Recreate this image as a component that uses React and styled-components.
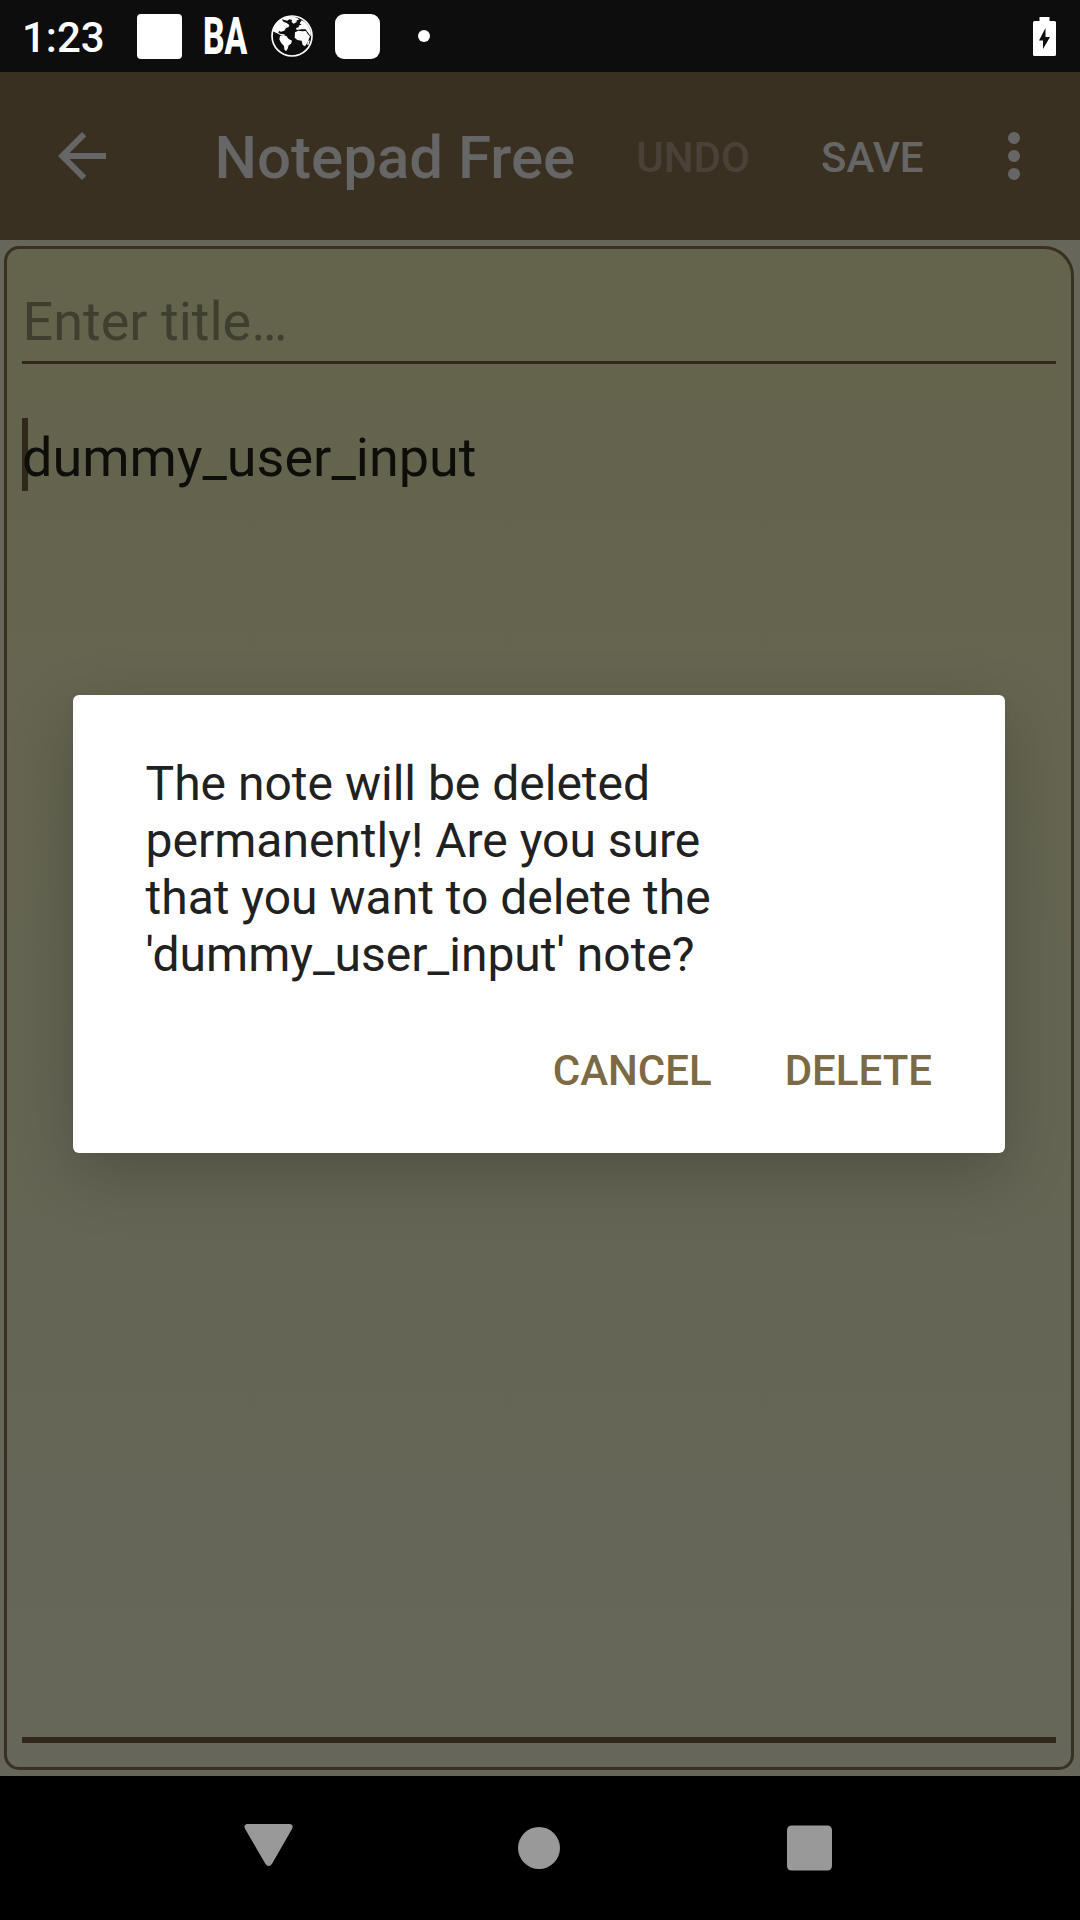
import React from "react";
import styled, { createGlobalStyle } from "styled-components";

const GlobalStyle = createGlobalStyle`
  *, *::before, *::after { box-sizing: border-box; }
  body {
    margin: 0;
    background: #000;
    font-family: Roboto, "Noto Sans", sans-serif;
  }
`;

const Screen = styled.div`
  position: relative;
  display: flex;
  flex-direction: column;
  width: 1080px;
  height: 1920px;
  overflow: hidden;
`;

const StatusBar = styled.header`
  display: flex;
  align-items: center;
  height: 72px;
  padding: 0 24px 0 22px;
  background: #0d0d0d;
  color: #fff;
`;

const Clock = styled.span`
  width: 115px;
  font-size: 42px;
  font-weight: 500;
  line-height: 50px;
  padding-top: 3px;
`;

const NoticeSquare = styled.span`
  width: 45px;
  height: 45px;
  border-radius: ${(p) => p.$radius}px;
  background: #fff;
  margin-right: ${(p) => p.$after}px;
`;

const BrandSlot = styled.span`
  display: flex;
  width: 68px;
  height: 50px;
`;

const BrandText = styled.span`
  font-size: 51px;
  line-height: 51px;
  font-weight: 800;
  transform: scaleX(0.66);
  transform-origin: left center;
`;

const Globe = styled.svg`
  width: 42px;
  height: 42px;
  margin-right: 22px;
  fill: #fff;
`;

const MoreDot = styled.span`
  width: 12px;
  height: 12px;
  border-radius: 50%;
  background: #fff;
`;

const Spacer = styled.span`
  flex: 1;
`;

const Toolbar = styled.nav`
  display: flex;
  align-items: center;
  height: 168px;
  padding: 0 30px 0 46px;
  background: #393022;
  color: #666;
`;

const ToolbarIcon = styled.svg`
  display: block;
  flex: none;
  width: 72px;
  height: 72px;
  fill: currentColor;
`;

const ToolbarTitle = styled.h1`
  width: 422px;
  margin: 0 0 0 96.5px;
  font-size: 60px;
  font-weight: 500;
  line-height: 70px;
  padding-top: 4px;
  white-space: nowrap;
`;

const ToolbarAction = styled.span`
  width: ${(p) => p.$width}px;
  font-size: 42px;
  font-weight: 500;
  line-height: 50px;
  padding-top: 3px;
  color: ${(p) => (p.$disabled ? "#4a4238" : "#666")};
`;

const Page = styled.main`
  display: flex;
  height: 1536px;
  padding: 6px 6px 6px 4px;
  background: #66665a;
`;

const NoteCard = styled.section`
  display: flex;
  flex-direction: column;
  flex: 1;
  padding: 0 15px 24px 15px;
  border: 3px solid #393022;
  border-radius: 15px 30px 15px 15px;
  background: linear-gradient(#64644c, #66665a);
`;

const TitleField = styled.div`
  height: 115px;
  padding: 41px 0 0 0.5px;
  border-bottom: 3px solid #30291b;
  font-size: 54px;
  line-height: 64px;
  color: #3f3f30;
`;

const BodyField = styled.div`
  display: flex;
  flex: 1;
  align-items: flex-start;
  padding-top: 54px;
  border-bottom: 6px solid #30291b;
  font-size: 54px;
  line-height: 73px;
  color: #0d0d0a;
`;

const Cursor = styled.span`
  width: 6px;
  height: 73px;
  margin-right: -6px;
  background: #30291b;
`;

const BodyText = styled.span`
  position: relative;
  padding-top: 3px;
`;

const NavBar = styled.footer`
  display: flex;
  align-items: center;
  justify-content: center;
  gap: 198px;
  height: 144px;
  padding-right: 2px;
  background: #000;
`;

const NavIcon = styled.svg`
  width: 72px;
  height: 72px;
  fill: #999;
`;

const DialogLayer = styled.div`
  position: absolute;
  inset: 72px 0 144px;
  display: flex;
  align-items: center;
  justify-content: center;
  padding-right: 2px;
`;

const Dialog = styled.div`
  display: flex;
  flex-direction: column;
  width: 932px;
  height: 458px;
  padding: 60px 73px 0 72.5px;
  border-radius: 6px;
  background: #fff;
  box-shadow: 0 22px 66px rgba(0, 0, 0, 0.2), 0 2px 10px rgba(0, 0, 0, 0.03);
`;

const Message = styled.p`
  width: 600px;
  margin: 0;
  font-size: 48px;
  line-height: 57px;
  color: #212121;
`;

const Actions = styled.div`
  display: flex;
  justify-content: flex-end;
  gap: 73px;
  margin-top: 63px;
`;

const DialogButton = styled.span`
  font-size: 42px;
  font-weight: 500;
  line-height: 50px;
  color: #7b6a43;
`;

const GlobeIcon = () => (
  <Globe viewBox="20 21 126 126">
    <circle cx="83" cy="84" r="60" fill="none" stroke="#fff" strokeWidth="5" />
    <path d="M25 70 32 51 45 37 52 34 58 42 66 44 75 51 73 57 65 60 60 68 50 71 44 69 42 74 49 78 60 79 61 82 50 82 38 76Z" />
    <path d="M53 33 67 26 84 25 98 29 105 35 97 37 97 42 88 47 82 42 83 36 75 34 69 38 60 36Z" />
    <path d="M47 84 58 81 67 85 72 92 83 98 80 107 73 112 70 122 65 130 60 124 59 114 50 104 45 94Z" />
    <path d="M92 73 102 68 115 70 125 69 130 78 137 85 133 95 128 106 122 115 115 111 112 98 99 96 91 89Z" />
    <path d="M95 60 103 58 104 52 112 51 106 46 112 37 123 43 134 57 140 73 139 85 132 75 124 64 112 64 97 66Z" />
    <path d="M131 99 136 97 133 110 128 110Z" />
  </Globe>
);

const BatteryIcon = () => (
  <svg width="23" height="39" viewBox="0 0 23 39">
    <path
      fill="#fff"
      fillRule="evenodd"
      d="M6.5 0H16.5V4H21.5Q23 4 23 5.5V37.5Q23 39 21.5 39H1.5Q0 39 0 37.5V5.5Q0 4 1.5 4H6.5ZM12.5 11 6 23.5H10V32L17 20H12.5Z"
    />
  </svg>
);

export default function App() {
  return (
    <Screen>
      <GlobalStyle />
      <StatusBar>
        <Clock>1:23</Clock>
        <NoticeSquare $radius={4} $after={21} />
        <BrandSlot>
          <BrandText>BA</BrandText>
        </BrandSlot>
        <GlobeIcon />
        <NoticeSquare $radius={9} $after={38} />
        <MoreDot />
        <Spacer />
        <BatteryIcon />
      </StatusBar>

      <Toolbar>
        <ToolbarIcon viewBox="0 0 24 24">
          <path d="M20 11H7.83l5.59-5.59L12 4l-8 8 8 8 1.41-1.41L7.83 13H20Z" />
        </ToolbarIcon>
        <ToolbarTitle>Notepad Free</ToolbarTitle>
        <ToolbarAction $disabled $width={185}>UNDO</ToolbarAction>
        <ToolbarAction $width={157}>SAVE</ToolbarAction>
        <ToolbarIcon viewBox="0 0 24 24">
          <circle cx="12" cy="6" r="2" />
          <circle cx="12" cy="12" r="2" />
          <circle cx="12" cy="18" r="2" />
        </ToolbarIcon>
      </Toolbar>

      <Page>
        <NoteCard>
          <TitleField>Enter title…</TitleField>
          <BodyField>
            <Cursor />
            <BodyText>dummy_user_input</BodyText>
          </BodyField>
        </NoteCard>
      </Page>

      <NavBar>
        <NavIcon viewBox="0 0 72 72">
          <path d="M14.500 12H56.500Q61 12.500 59 17L39.200 51.500Q35.700 56.500 32.200 51.500L12.200 17Q10 12.500 14.500 12Z" />
        </NavIcon>
        <NavIcon viewBox="0 0 72 72">
          <circle cx="36" cy="36" r="21" />
        </NavIcon>
        <NavIcon viewBox="0 0 72 72">
          <rect x="14" y="13.500" width="45" height="45" rx="4.500" />
        </NavIcon>
      </NavBar>

      <DialogLayer>
        <Dialog>
          <Message>
            The note will be deleted permanently! Are you sure that you want to delete the
            'dummy_user_input' note?
          </Message>
          <Actions>
            <DialogButton>CANCEL</DialogButton>
            <DialogButton>DELETE</DialogButton>
          </Actions>
        </Dialog>
      </DialogLayer>
    </Screen>
  );
}
